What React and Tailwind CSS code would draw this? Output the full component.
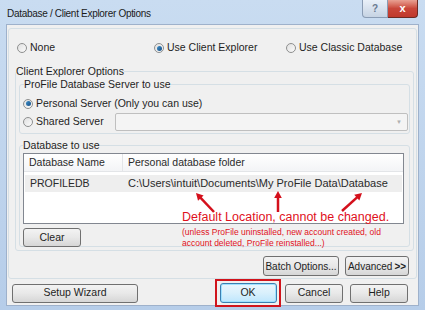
import React from "react";

const font = { fontFamily: '"Liberation Sans", Arial, sans-serif' };

function Radio({ checked, label, className = "" }) {
  return (
    <label className={"flex items-center gap-[3px] text-[10.5px] text-[#1e1e1e] whitespace-nowrap " + className}>
      <span className="w-[10px] h-[10px] rounded-full border border-[#8e8f8f] bg-gradient-to-br from-[#e0e0e0] to-[#fbfbfb] flex items-center justify-center">
        {checked && <span className="w-[5px] h-[5px] rounded-full bg-gradient-to-br from-[#3d8fc9] to-[#1b4f85]" />}
      </span>
      {label}
    </label>
  );
}

function Btn({ children, className = "" }) {
  return (
    <button
      className={
        "h-[19px] rounded-[3px] border border-[#707070] bg-gradient-to-b from-[#f3f3f3] via-[#e8e8e8] to-[#d6d6d6] text-[10.5px] text-[#1e1e1e] flex items-center justify-center whitespace-nowrap " +
        className
      }
    >
      {children}
    </button>
  );
}

function Arrow({ x1, y1, x2, y2 }) {
  const a = Math.atan2(y2 - y1, x2 - x1);
  const l = 8;
  const w = 0.5;
  const p1 = [x2 - l * Math.cos(a - w), y2 - l * Math.sin(a - w)];
  const p2 = [x2 - l * Math.cos(a + w), y2 - l * Math.sin(a + w)];
  return (
    <g>
      <line x1={x1} y1={y1} x2={x2 - 4 * Math.cos(a)} y2={y2 - 4 * Math.sin(a)} stroke="#d4101c" strokeWidth="2.5" />
      <polygon points={`${x2},${y2} ${p1[0]},${p1[1]} ${p2[0]},${p2[1]}`} fill="#d4101c" />
    </g>
  );
}

export default function App() {
  return (
    <div className="relative w-[425px] h-[310px] overflow-hidden bg-gradient-to-b from-[#c9dcf1] to-[#b6cde9]" style={font}>
      {/* title bar */}
      <div className="h-[24px] flex items-start justify-between">
        <div className="pl-[7px] pt-[6px] text-[10px] tracking-[-0.3px] text-[#1a1a1a]">Database / Client Explorer Options</div>
        <div className="flex mr-[7px]">
          <div className="w-[26px] h-[18px] rounded-bl-[4px] border border-[#8a9cb4] border-t-0 bg-gradient-to-b from-[#e9f0f8] to-[#c6d3e3] flex items-center justify-center text-[10px] font-bold text-[#6a7a90]">
            ?
          </div>
          <div className="w-[30px] h-[18px] rounded-br-[4px] border border-[#6d2a23] border-t-0 border-l-0 bg-gradient-to-b from-[#e8a093] via-[#c9463a] to-[#c0392d] flex items-center justify-center text-[11px] font-bold text-white">
            x
          </div>
        </div>
      </div>

      {/* client area */}
      <div className="mx-[6px] h-[282px] bg-[#f0f0f0] border border-[#9eb1cb] flex flex-col px-[1px]">
        <div className="mt-[3px] h-[253px] border border-[#d5dfe5] rounded-[3px] flex flex-col">
          <div className="flex items-center h-[36px] pt-[2px] pl-[8px]">
            <Radio label="None" className="w-[137px]" />
            <Radio checked label="Use Client Explorer" className="w-[132px]" />
            <Radio label="Use Classic Database" />
          </div>

          <fieldset className="ml-[6px] mr-[2px] h-[186px] border border-[#d5dfe5] rounded-[3px] px-[3px]">
            <legend className="text-[10.5px] text-[#1e1e1e] ml-[-3px] leading-[12px]">Client Explorer Options</legend>

            <fieldset className="h-[56px] border border-[#d5dfe5] rounded-[3px] pl-[3px] pr-[1px] mt-[1px]">
              <legend className="text-[10.5px] text-[#1e1e1e] leading-[12px] ml-[1px]">ProFile Database Server to use</legend>
              <Radio checked label="Personal Server (Only you can use)" className="h-[17px] mt-[5px]" />
              <div className="flex items-center h-[18px] mt-[1px]">
                <Radio label="Shared Server" className="w-[92px]" />
                <div className="flex-1 h-[18px] border border-[#bfbfbf] rounded-[2px] bg-[#f4f4f4] flex items-center justify-end pr-[5px]">
                  <span className="text-[6px] text-[#b0b0b0]">▼</span>
                </div>
              </div>
            </fieldset>

            <fieldset className="h-[108px] border border-[#d5dfe5] rounded-[3px] px-[3px] mt-[5px]">
              <legend className="text-[10.5px] text-[#1e1e1e] leading-[12px]">Database to use</legend>
              <div className="mt-[2px] mr-[2px] h-[71px] border border-[#828790] bg-white flex flex-col">
                <div className="h-[18px] flex text-[10.5px] text-[#2a2a2a] bg-gradient-to-b from-white to-[#f3f4f6] border-b border-[#e3e5e8]">
                  <div className="w-[99px] pl-[5px] flex items-center border-r border-[#e3e5e8]">Database Name</div>
                  <div className="pl-[5px] flex items-center">Personal database folder</div>
                </div>
                <div className="mt-[3px] mx-[1px] h-[17px] flex items-center text-[10.5px] text-[#2a2a2a] bg-[#eeeeee]">
                  <div className="w-[99px] pl-[5px]">PROFILEDB</div>
                  <div className="pl-[4px] text-[11px]">C:\Users\intuit\Documents\My ProFile Data\Database</div>
                </div>
              </div>
              <Btn className="w-[58px] mt-[4px]">Clear</Btn>
            </fieldset>
          </fieldset>

          <div className="flex justify-end gap-[6px] mr-[7px] mt-[5px]">
            <Btn className="w-[76px] h-[20px] text-[10px]">Batch Options...</Btn>
            <Btn className="w-[64px] h-[20px] text-[10px]">
              Advanced <span className="font-bold ml-[2px]">&gt;&gt;</span>
            </Btn>
          </div>
        </div>

        <div className="flex items-center mt-[2px] h-[24px]">
          <Btn className="w-[126px] ml-[4px]">Setup Wizard</Btn>
          <div className="ml-[77px] w-[66px] h-[28px] border-2 border-[#d0141c] flex items-center justify-center">
            <button className="w-[57px] h-[20px] rounded-[3px] border border-[#3c7fb1] bg-gradient-to-b from-[#eaf6fd] via-[#d9f0fc] to-[#bee6fd] text-[10.5px] text-[#1e1e1e] shadow-[inset_0_0_0_1px_#9fe1ff]">
              OK
            </button>
          </div>
          <Btn className="w-[58px] ml-[4px]">Cancel</Btn>
          <Btn className="w-[58px] ml-[7px]">Help</Btn>
        </div>
      </div>

      {/* annotation overlay */}
      <svg className="absolute left-0 top-0" width="425" height="310">
        <Arrow x1={214} y1={212} x2={196} y2={193} />
        <Arrow x1={278} y1={212} x2={278} y2={191} />
        <Arrow x1={342} y1={211} x2={362} y2={193} />
      </svg>
      <div className="absolute left-[182px] top-[210px] text-[12.5px] text-[#e0101c] leading-[15px]">Default Location, cannot be changed.</div>
      <div className="absolute left-[182px] top-[227px] text-[8.5px] text-[#e0101c] leading-[11px]">
        (unless ProFile uninstalled, new account created, old
        <br />
        account deleted, ProFile reinstalled...)
      </div>
    </div>
  );
}
